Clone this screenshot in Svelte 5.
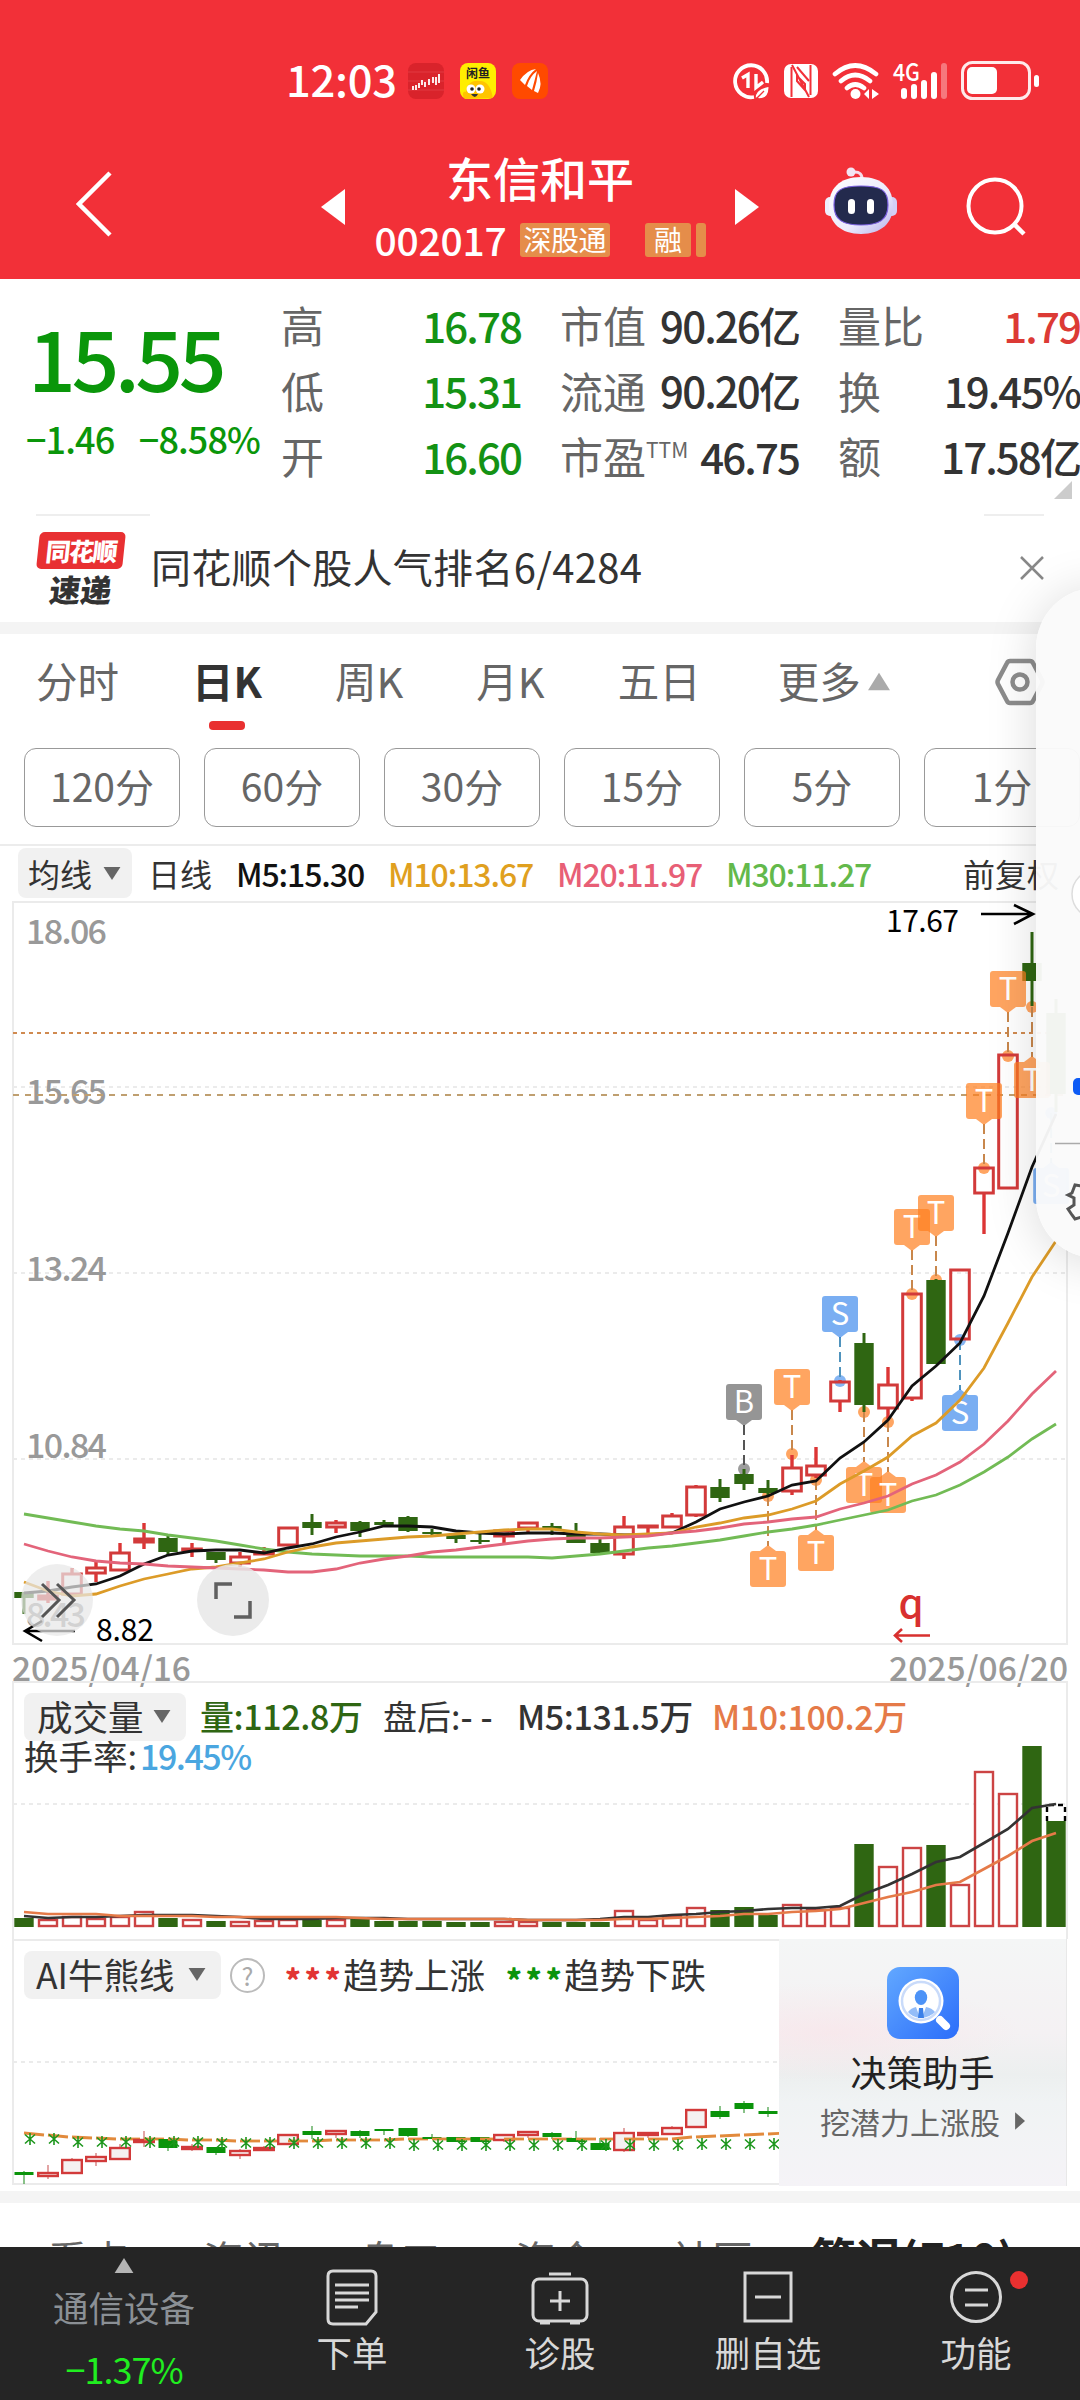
<script lang="ts">
	type Candle = [string, number, number, number, number];

	const STEP = 24;
	const cx = (i: number) => STEP + STEP * i;
	const toPoints = (ys: number[]) => ys.map((y, i) => `${cx(i)},${y}`).join(' ');

	const quotes = [
		[
			{ label: '高', value: '16.78', tone: 'down' },
			{ label: '市值', value: '90.26亿', tone: '' },
			{ label: '量比', value: '1.79', tone: 'up' }
		],
		[
			{ label: '低', value: '15.31', tone: 'down' },
			{ label: '流通', value: '90.20亿', tone: '' },
			{ label: '换', value: '19.45%', tone: '' }
		],
		[
			{ label: '开', value: '16.60', tone: 'down' },
			{ label: '市盈', sup: 'TTM', value: '46.75', tone: '' },
			{ label: '额', value: '17.58亿', tone: '' }
		]
	];

	const tabs = ['分时', '日K', '周K', '月K', '五日'];
	const periods = ['120分', '60分', '30分', '15分', '5分', '1分'];
	let activeTab = $state('日K');

	// kind (r = rise, g = fall), body top, body bottom, high, low
	const candles: Candle[] = [
		['g', 1592, 1598, 1592, 1614], ['r', 1596, 1599, 1581, 1603], ['r', 1574, 1594, 1568, 1594],
		['r', 1568, 1573, 1560, 1582], ['r', 1553, 1570, 1543, 1570], ['r', 1539, 1542, 1523, 1549],
		['g', 1538, 1552, 1535, 1555], ['r', 1549, 1550, 1543, 1557], ['g', 1552, 1560, 1552, 1563],
		['r', 1557, 1563, 1552, 1567], ['r', 1553, 1554, 1547, 1554], ['r', 1528, 1545, 1528, 1545],
		['g', 1522, 1528, 1514, 1535], ['r', 1523, 1527, 1520, 1533], ['g', 1522, 1531, 1521, 1537],
		['g', 1522, 1525, 1520, 1526], ['g', 1517, 1531, 1516, 1532], ['g', 1532, 1534, 1529, 1535],
		['g', 1535, 1539, 1534, 1543], ['g', 1540, 1542, 1534, 1544], ['r', 1531, 1536, 1529, 1543],
		['r', 1523, 1528, 1523, 1534], ['g', 1526, 1530, 1523, 1535], ['g', 1533, 1543, 1523, 1543],
		['g', 1543, 1553, 1539, 1553], ['r', 1527, 1554, 1516, 1559], ['r', 1526, 1527, 1526, 1533],
		['r', 1516, 1527, 1513, 1527], ['r', 1487, 1515, 1485, 1517], ['g', 1487, 1498, 1479, 1502],
		['g', 1474, 1484, 1469, 1490], ['g', 1488, 1493, 1480, 1497], ['r', 1468, 1491, 1455, 1495],
		['r', 1466, 1475, 1447, 1478], ['r', 1382, 1401, 1380, 1412], ['g', 1343, 1405, 1333, 1412],
		['r', 1385, 1408, 1367, 1419], ['r', 1294, 1398, 1293, 1401], ['g', 1280, 1364, 1279, 1364],
		['r', 1270, 1339, 1270, 1339], ['r', 1168, 1193, 1168, 1234], ['r', 1055, 1188, 1055, 1188],
		['g', 963, 981, 932, 1006], ['g', 1013, 1094, 999, 1112]
	];

	const averages = [
		{ color: '#72bb55', ys: [1514, 1518, 1522, 1526, 1529, 1531, 1535, 1538, 1541, 1545, 1549, 1552, 1554, 1555, 1556, 1556, 1556, 1557, 1557, 1557, 1557, 1557, 1558, 1556, 1554, 1551, 1548, 1546, 1543, 1540, 1536, 1532, 1529, 1525, 1520, 1515, 1510, 1501, 1495, 1485, 1472, 1457, 1439, 1424] },
		{ color: '#111111', ys: [1593, 1591, 1587, 1584, 1576, 1564, 1555, 1551, 1550, 1550, 1553, 1548, 1544, 1537, 1532, 1526, 1526, 1527, 1531, 1533, 1534, 1533, 1533, 1534, 1534, 1535, 1535, 1533, 1522, 1509, 1502, 1496, 1485, 1481, 1458, 1442, 1420, 1386, 1366, 1343, 1296, 1233, 1167, 1114] },
		{ color: '#dc9b28', ys: [1582, 1591, 1596, 1594, 1586, 1579, 1574, 1569, 1567, 1563, 1559, 1552, 1547, 1543, 1541, 1539, 1537, 1536, 1534, 1532, 1530, 1529, 1529, 1532, 1534, 1535, 1534, 1533, 1527, 1523, 1518, 1515, 1509, 1501, 1484, 1471, 1457, 1436, 1423, 1400, 1368, 1323, 1277, 1241] },
		{ color: '#e3647a', ys: [1544, 1551, 1557, 1561, 1563, 1564, 1566, 1567, 1568, 1569, 1570, 1572, 1572, 1569, 1563, 1559, 1556, 1552, 1550, 1547, 1544, 1541, 1539, 1538, 1538, 1537, 1536, 1533, 1531, 1528, 1524, 1522, 1519, 1517, 1509, 1503, 1496, 1484, 1475, 1462, 1444, 1421, 1394, 1371] }
	];

	// Trade marks: anchor is the candle price the mark hangs on
	const marks = [
		{ i: 30, text: 'B', anchor: 1469, above: true },
		{ i: 32, text: 'T', anchor: 1454, above: true },
		{ i: 34, text: 'S', anchor: 1381, above: true },
		{ i: 37, text: 'T', anchor: 1294, above: true },
		{ i: 38, text: 'T', anchor: 1280, above: true },
		{ i: 40, text: 'T', anchor: 1168, above: true },
		{ i: 41, text: 'T', anchor: 1056, above: true },
		{ i: 31, text: 'T', anchor: 1496, above: false },
		{ i: 33, text: 'T', anchor: 1480, above: false },
		{ i: 35, text: 'T', anchor: 1412, above: false },
		{ i: 36, text: 'T', anchor: 1422, above: false },
		{ i: 39, text: 'S', anchor: 1340, above: false },
		{ i: 42, text: 'T', anchor: 1007, above: false },
		{ i: 42.8, text: 'S', anchor: 1113, above: false }
	];
	const markFill: Record<string, string> = { T: '#ff7f1f', S: '#0b6be8', B: '#3c3c3c' };
	const markLine: Record<string, string> = { T: '#c8874c', S: '#4f93bd', B: '#555555' };

	const priceLabels = [
		{ text: '18.06', y: 944 },
		{ text: '15.65', y: 1104 },
		{ text: '13.24', y: 1281 },
		{ text: '10.84', y: 1458 },
		{ text: '8.43', y: 1627 }
	];

	const volumes: [string, number][] = [
		['g', 1918], ['r', 1920], ['r', 1917], ['r', 1919], ['r', 1917], ['r', 1912], ['g', 1918], ['r', 1920],
		['g', 1921], ['r', 1922], ['r', 1921], ['r', 1920], ['g', 1920], ['r', 1920], ['g', 1919], ['g', 1921],
		['g', 1921], ['g', 1921], ['g', 1922], ['g', 1922], ['r', 1922], ['r', 1922], ['g', 1922], ['g', 1922],
		['g', 1922], ['r', 1911], ['r', 1920], ['r', 1916], ['r', 1908], ['g', 1910], ['g', 1907], ['g', 1915],
		['r', 1905], ['r', 1910], ['r', 1908], ['g', 1844], ['r', 1867], ['r', 1848], ['g', 1845], ['r', 1885],
		['r', 1772], ['r', 1794], ['g', 1746], ['g', 1821]
	];
	const volumeM5 = [1916, 1918, 1917, 1917, 1916, 1915, 1915, 1915, 1916, 1917, 1919, 1919, 1919, 1918, 1918, 1918, 1919, 1919, 1919, 1919, 1919, 1920, 1920, 1920, 1919, 1917, 1917, 1915, 1914, 1912, 1911, 1909, 1908, 1908, 1906, 1894, 1885, 1874, 1862, 1857, 1843, 1829, 1808, 1804];
	const volumeM10 = [1912, 1914, 1914, 1914, 1916, 1916, 1916, 1916, 1917, 1917, 1917, 1917, 1917, 1917, 1918, 1919, 1919, 1919, 1919, 1919, 1919, 1920, 1920, 1920, 1920, 1919, 1919, 1918, 1917, 1916, 1914, 1914, 1912, 1911, 1909, 1903, 1897, 1892, 1885, 1882, 1869, 1856, 1841, 1833];

	const trend: Candle[] = [
		['g', 2172, 2175, 2171, 2184], ['r', 2173, 2176, 2165, 2179], ['r', 2160, 2173, 2158, 2173],
		['r', 2157, 2161, 2153, 2166], ['r', 2148, 2159, 2144, 2159], ['r', 2140, 2142, 2131, 2147],
		['g', 2139, 2148, 2139, 2151], ['r', 2147, 2149, 2144, 2151], ['g', 2147, 2153, 2147, 2155],
		['r', 2151, 2155, 2149, 2159], ['r', 2148, 2150, 2146, 2150], ['r', 2135, 2144, 2135, 2144],
		['g', 2131, 2135, 2126, 2139], ['r', 2131, 2134, 2131, 2138], ['g', 2131, 2136, 2130, 2138],
		['g', 2129, 2131, 2129, 2135], ['g', 2128, 2136, 2128, 2137], ['g', 2137, 2139, 2134, 2139],
		['g', 2137, 2142, 2137, 2142], ['g', 2137, 2142, 2137, 2142], ['r', 2135, 2140, 2135, 2142],
		['r', 2132, 2135, 2131, 2138], ['g', 2133, 2137, 2132, 2139], ['g', 2138, 2142, 2131, 2142],
		['g', 2143, 2150, 2138, 2150], ['r', 2133, 2150, 2128, 2152], ['r', 2133, 2135, 2133, 2138],
		['r', 2128, 2134, 2126, 2134], ['r', 2110, 2127, 2110, 2127], ['g', 2111, 2117, 2106, 2119],
		['g', 2103, 2109, 2101, 2113], ['g', 2111, 2114, 2107, 2117]
	];
	const trendLine = [2133, 2135, 2137, 2138, 2139, 2139, 2139, 2140, 2140, 2141, 2141, 2141, 2141, 2140, 2140, 2140, 2139, 2139, 2139, 2139, 2139, 2139, 2139, 2139, 2139, 2139, 2139, 2139, 2137, 2136, 2135, 2134, 2133];
	const starY = (i: number) => (i < 2 ? 2139 : i < 8 ? 2142 : i < 16 ? 2143 : i < 28 ? 2145 : 2144);

	const sections = ['看点', '资讯', '盘口', '资金', '社区'];
</script>

{#snippet caret(down: boolean, color: string, w: number, h: number)}
	<svg class="caret" width={w} height={h} viewBox="0 0 20 16">
		<path d={down ? 'M1 1h18L10 15z' : 'M10 0L20 16H0z'} fill={color} />
	</svg>
{/snippet}

<div class="screen">
	<header>
		<div class="status">
			<span class="time">12:03</span>
			<svg class="app" width="36" height="36" viewBox="0 0 36 36">
				<rect width="36" height="36" rx="8" fill="#d9232b" />
				<path d="M0 9h36M0 18h36M0 27h36" stroke="#e84a50" stroke-width=".6" />
				<path d="M5 23v4M8 22v5M11 25v-5M14 22v-5M17 24v-5M21 22v-6M25 20v-6M28 22v-8M31 20V11" stroke="#fff" stroke-width="1.8" />
			</svg>
			<svg class="app" width="36" height="36" viewBox="0 0 36 36">
				<rect width="36" height="36" rx="8" fill="#ffee00" />
				<text x="18" y="15" font-size="12" font-weight="700" text-anchor="middle" fill="#222">闲鱼</text>
				<path d="M5 36c-5-6 0-9 1-7 0-7 6-12 13-11 6-1 12 4 14 17z" fill="#ffc400" />
				<circle cx="11" cy="26" r="4.5" fill="#fff" /><circle cx="20" cy="26" r="4.5" fill="#fff" />
				<circle cx="12" cy="26" r="1.8" fill="#222" /><circle cx="19" cy="26" r="1.8" fill="#222" />
				<path d="M11 31h7q-3 6-7 0z" fill="#333" />
			</svg>
			<svg class="app" width="36" height="36" viewBox="0 0 36 36">
				<rect width="36" height="36" rx="8" fill="#ff4a00" />
				<path d="M8 17Q15 7 24 6Q17 11 13 22zM15 23Q18 13 25 8Q23 16 20 27zM22 28Q25 18 26 10Q31 21 26 30z" fill="#fff" />
			</svg>
			<svg class="signals" width="312" height="44" viewBox="730 58 312 44">
				<g fill="none" stroke="#fff" stroke-width="3.8">
					<path d="M754 96a16 16 0 1 1 13-14" />
					<path d="M742 77l6-3.500v13.500M763 81l-7 5.500V73" stroke-width="3.4" />
				</g>
				<path d="M755 97q0-9 14-12q1 13-10 13zM755 99l9-9" fill="#fff" stroke="#f23038" stroke-width="1.3" />
				<rect x="784" y="63" width="34" height="34" rx="7" fill="#fff" />
				<path d="M791.500 66v30M810.500 64v30" stroke="#f23038" stroke-width="2" />
				<path d="M792 64l17 32M797 75l8 8v6l-8-9zM797 66l12 14" fill="none" stroke="#f23038" stroke-width="2" />
				<g fill="none" stroke="#fff" stroke-width="4.6" stroke-linecap="round">
					<path d="M835 73q20-17 41 0M841 80q14-12 29 0M847 87q8-7 17 0" />
				</g>
				<circle cx="855.500" cy="93" r="5" fill="#fff" />
				<path d="M864 93l5-5v10zM872 88l7 5-7 5z" fill="#fff" />
				<text x="893" y="80" font-size="24" font-weight="500" fill="#fff" textLength="27" lengthAdjust="spacingAndGlyphs">4G</text>
				<g fill="#fff">
					<rect x="901" y="87" width="6" height="11" rx="3" />
					<rect x="911" y="83" width="6" height="15" rx="3" />
					<rect x="921" y="79" width="6" height="19" rx="3" />
					<rect x="931" y="71" width="6" height="27" rx="3" />
					<rect x="941" y="62" width="6" height="36" rx="3" opacity=".35" />
					<rect x="967" y="66" width="30" height="27" rx="5" />
					<rect x="1034" y="74" width="5" height="12" rx="2.500" />
				</g>
				<rect x="962.500" y="61.500" width="67" height="36" rx="10" fill="none" stroke="#fff" stroke-width="3" opacity=".9" />
			</svg>
		</div>
		<div class="nav">
			<svg class="back" width="38" height="66" viewBox="0 0 38 66">
				<path d="M34 2L3 33L34 64" fill="none" stroke="#fff" stroke-width="4.500" />
			</svg>
			<svg width="24" height="36" viewBox="0 0 24 36"><path d="M24 0v36L0 18z" fill="#fff" /></svg>
			<div class="stock">
				<h1>东信和平</h1>
				<div class="code">
					<span>002017</span>
					<i class="tag">深股通</i>
					<i class="tag margin">融</i>
					<i class="tag sliver"></i>
				</div>
			</div>
			<svg width="24" height="36" viewBox="0 0 24 36"><path d="M0 0v36L24 18z" fill="#fff" /></svg>
			<svg class="robot" width="72" height="68" viewBox="0 0 72 68">
				<defs>
					<linearGradient id="shell" x1="0" y1="0" x2="1" y2="1">
						<stop offset="0" stop-color="#fff" /><stop offset=".6" stop-color="#eceafc" /><stop offset="1" stop-color="#b5b1ea" />
					</linearGradient>
				</defs>
				<path d="M28 5q10-1 9 9" fill="none" stroke="#f6dcea" stroke-width="3" />
				<circle cx="26" cy="5" r="4.500" fill="#f3e4f2" />
				<rect x="0" y="30" width="12" height="19" rx="5" fill="#efeefd" />
				<rect x="60" y="30" width="12" height="19" rx="5" fill="#d3d0f6" />
				<path d="M36 10c22 0 32 12 32 29S56 67 36 67S4 56 4 39S14 10 36 10z" fill="url(#shell)" />
				<path d="M36 19c20 0 27 4 27 19s-9 20-27 20S9 53 9 38s7-19 27-19z" fill="#232a4d" stroke="#7a5fe0" stroke-width="1.200" />
				<rect x="23" y="32" width="7" height="15" rx="3.500" fill="#fff" />
				<rect x="42" y="32" width="7" height="15" rx="3.500" fill="#fff" />
			</svg>
			<svg class="search" width="62" height="62" viewBox="0 0 62 62">
				<circle cx="29" cy="30" r="26.500" fill="none" stroke="#fff" stroke-width="4" />
				<path d="M48 48l10 10" stroke="#fff" stroke-width="4.500" />
			</svg>
		</div>
	</header>

	<section class="quote">
		<div class="last">
			<strong>15.55</strong>
			<div class="change"><span>−1.46</span><span>−8.58%</span></div>
		</div>
		<div class="figures">
			{#each quotes as row}
				{#each row as cell}
					<div class="figure">
						<span class="label">{cell.label}{#if cell.sup}<sup>{cell.sup}</sup>{/if}</span>
						<span class="value {cell.tone}">{cell.value}</span>
					</div>
				{/each}
			{/each}
		</div>
		<svg class="corner" width="18" height="18" viewBox="0 0 18 18"><path d="M18 0v18H0z" fill="#ccc" /></svg>
	</section>

	<section class="notice">
		<div class="logo">
			<b>同花顺</b>
			<em>速递</em>
		</div>
		<p>同花顺个股人气排名6/4284</p>
		<svg width="24" height="24" viewBox="0 0 24 24"><path d="M1 1l22 22M23 1L1 23" stroke="#888" stroke-width="2.500" /></svg>
	</section>

	<nav class="tabs">
		{#each tabs as tab}
			<button class:active={tab === activeTab} onclick={() => (activeTab = tab)}>{tab}</button>
		{/each}
		<button class="more">更多{@render caret(false, '#aaa', 22, 19)}</button>
		<svg class="hex" width="50" height="48" viewBox="0 0 50 48">
			<path d="M15 3h20q2 0 3 2l9 17q1 2 0 4l-9 17q-1 2-3 2H15q-2 0-3-2L3 26q-1-2 0-4l9-17q1-2 3-2z" fill="none" stroke="#8c8c8c" stroke-width="4.500" />
			<circle cx="25" cy="24" r="7.500" fill="none" stroke="#8c8c8c" stroke-width="4.500" />
		</svg>
	</nav>
	<div class="periods">
		{#each periods as period}
			<button>{period}</button>
		{/each}
	</div>

	<div class="legend">
		<span class="chip">均线{@render caret(true, '#666', 20, 15)}</span>
		<span class="name">日线</span>
		<span class="m5">M5:15.30</span>
		<span class="m10">M10:13.67</span>
		<span class="m20">M20:11.97</span>
		<span class="m30">M30:11.27</span>
		<span class="adjust">前复权</span>
	</div>

	<svg class="kline" width="1080" height="748" viewBox="0 900 1080 748">
		<rect x="13" y="902" width="1054" height="742" fill="none" stroke="#ebebeb" stroke-width="2" />
		{#each [1087, 1273, 1459] as y}
			<line x1="13" x2="1067" y1={y} y2={y} stroke="#ebebeb" stroke-width="2" stroke-dasharray="4 4" />
		{/each}
		{#each priceLabels as label}
			<text class="axis" x="26" y={label.y} textLength={label.text.length > 4 ? 81 : 60}>{label.text}</text>
		{/each}
		<line x1="13" x2="1067" y1="1033" y2="1033" stroke="#d08a50" stroke-width="2" stroke-dasharray="4 4" />
		<line x1="13" x2="1067" y1="1095" y2="1095" stroke="#bf9f70" stroke-width="2" stroke-dasharray="6 6" />

		{#each marks as m}
			{@const x = cx(m.i)}
			{@const top = m.above ? m.anchor - 85 : m.anchor + 55}
			<circle cx={x} cy={m.anchor} r="6" fill={markFill[m.text]} opacity={m.text === 'T' ? 0.7 : 0.5} />
			<line x1={x} x2={x} y1={m.above ? top + 41 : m.anchor} y2={m.above ? m.anchor : top - 5} stroke={markLine[m.text]} stroke-width="2" stroke-dasharray="10 5" />
		{/each}
		{#each candles as [kind, top, bottom, high, low], i}
			{@const x = cx(i)}
			{#if kind === 'g'}
				<path d="M{x} {high}V{low}" stroke="#2f6612" stroke-width="3" />
				<rect x={x - 9.7} y={top} width="19.4" height={bottom - top} fill="#2f6612" />
			{:else}
				<path d="M{x} {high}V{top}M{x} {bottom}V{low}" stroke="#dc3535" stroke-width="3.4" />
				<rect x={x - 9.3} y={top} width="18.600" height={bottom - top} fill="none" stroke="#d23a3a" stroke-width="3" />
			{/if}
		{/each}
		{#each marks as m}
			{@const x = cx(m.i)}
			{@const top = m.above ? m.anchor - 85 : m.anchor + 55}
			<g>
				<g fill={markFill[m.text]} opacity={m.text === 'T' ? 0.7 : 0.54}>
					<rect x={x - 18} y={top} width="36" height="36" rx="3" />
					{#if m.above}
						<path d="M{x - 8} {top + 36}h16l-8 6z" />
					{:else}
						<path d="M{x - 8} {top}h16l-8 -6z" />
					{/if}
				</g>
				<text class="mark" x={x} y={top + 29}>{m.text}</text>
			</g>
		{/each}
		{#each averages as line}
			<polyline points={toPoints(line.ys)} fill="none" stroke={line.color} stroke-width="2.800" />
		{/each}

		<text class="note" x="886" y="932" textLength="73">17.67</text>
		<path d="M981 914h51M1014 905l19 9-19 10" fill="none" stroke="#000" stroke-width="2.600" />
		<text class="note" x="96" y="1641" textLength="58">8.82</text>
		<path d="M75 1631H25M42 1621l-17 10 17 10" fill="none" stroke="#000" stroke-width="2.600" />
		<text class="flag" x="911" y="1618">q</text>
		<path d="M930 1635.500H895M902 1629l-7 6.500 7 6.500" fill="none" stroke="#d8302f" stroke-width="2.600" />

		<circle cx="57" cy="1600" r="36" fill="#e8e8e8" opacity=".72" />
		<path d="M42 1584l17 16-17 17M57 1584l17 16-17 17" fill="none" stroke="#555" stroke-width="3" />
		<circle cx="233" cy="1600" r="36" fill="#e8e8e8" opacity=".85" />
		<path d="M216 1599v-15h16M250 1601v16h-16" fill="none" stroke="#606060" stroke-width="3.500" />
	</svg>

	<div class="dates"><span>2025/04/16</span><span>2025/06/20</span></div>

	<section class="volume">
		<svg width="1080" height="258" viewBox="0 1681 1080 258">
			<path d="M13 1939V1682H1067V1939" fill="none" stroke="#ebebeb" stroke-width="2" />
			<line x1="13" x2="1067" y1="1804" y2="1804" stroke="#ebebeb" stroke-width="2" stroke-dasharray="4 4" />
			{#each volumes as [kind, top], i}
				{#if kind === 'g'}
					<rect x={cx(i) - 9.7} y={top} width="19.400" height={1927 - top} fill="#2f6612" />
				{:else}
					<rect x={cx(i) - 9} y={top} width="18" height={1926 - top} fill="#fff" stroke="#cc4444" stroke-width="2.400" />
				{/if}
			{/each}
			<path d="M1047 1821v-16h18v16" fill="none" stroke="#000" stroke-width="2.400" stroke-dasharray="5 4" />
			<polyline points={toPoints(volumeM5)} fill="none" stroke="#333" stroke-width="2.700" />
			<polyline points={toPoints(volumeM10)} fill="none" stroke="#e57a48" stroke-width="2.700" />
		</svg>
		<div class="readout">
			<div class="line">
				<span class="chip">成交量{@render caret(true, '#666', 20, 15)}</span>
				<span class="amount">量:112.8万</span>
				<span class="after">盘后:<i>--</i></span>
				<span class="avg5">M5:131.5万</span>
				<span class="avg10">M10:100.2万</span>
			</div>
			<div class="turnover">换手率:<span>19.45%</span></div>
		</div>
	</section>

	<section class="ai">
		<div class="trend">
			<svg width="779" height="250" viewBox="0 1939 779 250">
				<path d="M779 1940H13V2184H779" fill="none" stroke="#ebebeb" stroke-width="2" />
				<line x1="13" x2="779" y1="2062" y2="2062" stroke="#ebebeb" stroke-width="2" stroke-dasharray="4 4" />
				{#each trend as [kind, top, bottom, high, low], i}
					{@const x = cx(i)}
					{#if kind === 'g'}
						<path d="M{x} {high}V{low}" stroke="#3c9a3c" stroke-width="1.200" />
						<rect x={x - 9.500} y={top} width="19" height={bottom - top} fill="#0b940b" />
					{:else}
						<path d="M{x} {high}V{top}M{x} {bottom}V{low}" stroke="#d06a6a" stroke-width="1.200" />
						<rect x={x - 9.800} y={top} width="19.600" height={bottom - top} fill="#f5f1f1" stroke="#d23a3a" stroke-width="2.400" />
					{/if}
					<path d="M{x} {trendLine[i]}L{x + 20} {trendLine[i + 1]}" stroke="#e28a3c" stroke-width="2.800" />
					<path transform="translate({x + 6} {starY(i)})" d="M0 -6V6M-5 -4.500L5 4.500M5 -4.500L-5 4.500" stroke="#1c961c" stroke-width="1.600" />
				{/each}
			</svg>
			<div class="readout line">
				<span class="chip">AI牛熊线{@render caret(true, '#666', 20, 15)}</span>
				<span class="help">?</span>
				<span class="stars rise">***</span><span class="way">趋势上涨</span>
				<span class="stars fall">***</span><span class="way">趋势下跌</span>
			</div>
		</div>
		<aside>
			<svg width="72" height="72" viewBox="0 0 72 72">
				<defs>
					<linearGradient id="tile" x1="0" y1="0" x2="1" y2="1">
						<stop offset="0" stop-color="#62a8ff" /><stop offset="1" stop-color="#2b6dfa" />
					</linearGradient>
				</defs>
				<rect width="72" height="72" rx="13" fill="url(#tile)" />
				<path d="M53 53l6 6" stroke="#fff" stroke-width="8" stroke-linecap="round" />
				<circle cx="34" cy="34" r="22.500" fill="#fff" />
				<circle cx="34" cy="34" r="19" fill="#fff" stroke="#c9dbfa" stroke-width="2.500" />
				<ellipse cx="34" cy="30.500" rx="6.200" ry="7.500" fill="#4d93f7" />
				<path d="M21 45q3-4 8-5l4 11q-8-1-12-6zM48 45q-3-4-9-5l-4 11q8-1 13-6z" fill="#94bdf8" />
				<path d="M32 41h4l1 10h-6z" fill="#3b80e8" />
			</svg>
			<h2>决策助手</h2>
			<p>挖潜力上涨股 <svg width="11" height="20" viewBox="0 0 10 18"><path d="M1 1l9 8-9 8z" fill="#666" /></svg></p>
		</aside>
	</section>

	<div class="sections">
		{#each sections as name}
			<span>{name}</span>
		{/each}
		<b>简况(F10)</b>
	</div>

	<footer>
		<div class="sector">
			{@render caret(false, '#b5b5b5', 26, 15)}
			<span>通信设备</span>
			<b>−1.37%</b>
		</div>
		<div class="action">
			<svg width="60" height="60" viewBox="0 0 60 60">
				<path d="M11 4h38q5 0 5 5v36L44 57H11q-5 0-5-5V9q0-5 5-5z" />
				<path d="M13 18h34M13 26h34M13 33h34M13 40h23" />
			</svg>
			<span>下单</span>
		</div>
		<div class="action">
			<svg width="60" height="60" viewBox="0 0 60 60">
				<rect x="3" y="12" width="54" height="42" rx="6" />
				<path d="M19 7h22M30 24v20M20 34h20M10 56h10M40 56h10" />
			</svg>
			<span>诊股</span>
		</div>
		<div class="action">
			<svg width="60" height="60" viewBox="0 0 60 60">
				<rect x="7" y="6" width="46" height="48" />
				<path d="M17 30h26" />
			</svg>
			<span>删自选</span>
		</div>
		<div class="action">
			<svg width="60" height="60" viewBox="0 0 60 60">
				<circle cx="30" cy="30" r="24.500" />
				<path d="M19 23h23M19 38h23" />
			</svg>
			<i class="dot"></i>
			<span>功能</span>
		</div>
	</footer>

	<div class="drawer">
		<svg width="44" height="670" viewBox="1036 588 44 670">
			<circle cx="1096" cy="894" r="24" fill="#fff" stroke="#ddd" stroke-width="1.500" />
			<rect x="1073" y="1078" width="20" height="17" rx="5" fill="#0d5bf5" />
			<path d="M1055 1143.500h25" stroke="#aaa" stroke-width="1.500" />
			<path d="M1088 1187l-13-2-3 8-4 2 6 3v7l-6 4 4 6 3 4 13-4" fill="none" stroke="#555" stroke-width="3" />
		</svg>
	</div>
</div>

<style>
	:global(body) {
		background: #fff;
	}

	.screen {
		position: relative;
		width: 1080px;
		height: 2400px;
		overflow: hidden;
		display: flex;
		flex-direction: column;
		background: #fff;
		color: #333;
		font-family: 'Noto Sans CJK SC', 'Noto Sans', sans-serif;
		line-height: 1;
	}

	.screen > * {
		flex-shrink: 0;
	}

	h1,
	h2,
	p {
		margin: 0;
		font-weight: 400;
	}

	svg {
		display: block;
		flex-shrink: 0;
	}

	button {
		padding: 0;
		border: none;
		background: none;
		font: inherit;
		color: inherit;
	}

	header {
		height: 279px;
		box-sizing: border-box;
		background: #f23038;
		color: #fff;
	}

	.status {
		display: flex;
		align-items: center;
		gap: 16px;
		height: 122px;
		padding: 40px 38px 0 286px;
		box-sizing: border-box;
	}

	.time {
		width: 106px;
		padding-bottom: 5px;
		font-size: 43.5px;
		font-weight: 500;
		white-space: nowrap;
		letter-spacing: -0.3px;
	}

	.signals {
		margin-left: auto;
	}

	.nav {
		display: flex;
		align-items: center;
		height: 157px;
		padding: 12px 0 0 76px;
		box-sizing: border-box;
	}

	.back {
		margin-right: 207px;
		margin-top: -5px;
	}

	.stock {
		width: 390px;
		height: 145px;
		display: flex;
		flex-direction: column;
		align-items: center;
	}

	.stock h1 {
		margin-top: 19px;
		font-size: 47px;
		font-weight: 500;
	}

	.code {
		display: flex;
		align-items: center;
		height: 40px;
		margin-top: 20px;
		font-size: 39px;
		font-weight: 500;
	}

	.code span {
		margin-top: -2px;
		letter-spacing: -0.2px;
	}

	.tag {
		height: 34px;
		margin-left: 13px;
		line-height: 33px;
		font-size: 28px;
		font-style: normal;
		font-weight: 400;
		letter-spacing: -0.5px;
		background: #e58d4a;
		border-radius: 3px;
		padding: 0 4px;
	}

	.tag.margin {
		margin-left: 35px;
		padding: 0 9px;
	}

	.tag.sliver {
		width: 10px;
		margin-left: 5px;
		padding: 0;
	}

	.robot {
		margin-left: 66px;
		margin-top: -12px;
	}

	.search {
		margin-left: 69px;
	}

	.quote {
		position: relative;
		display: flex;
		height: 235px;
	}

	.last {
		width: 281px;
		color: #0a960a;
	}

	.last strong {
		display: block;
		height: 84px;
		margin: 35px 0 0 28px;
		line-height: 84px;
		font-size: 84px;
		font-weight: 500;
		letter-spacing: -4.5px;
	}

	.change {
		display: flex;
		justify-content: space-between;
		margin-top: 22px;
		padding: 0 21px 0 26px;
		font-size: 36px;
		font-weight: 500;
		letter-spacing: -0.9px;
	}

	.figures {
		flex: 1;
		display: grid;
		grid-template-columns: 240px 239px 242px;
		grid-template-rows: repeat(3, 65.5px);
		column-gap: 39px;
		padding-top: 13px;
	}

	.figure {
		display: flex;
		align-items: center;
		justify-content: space-between;
		font-size: 43px;
		white-space: nowrap;
	}

	.label {
		color: #666;
	}

	.label sup {
		font-size: 21px;
		vertical-align: 16px;
		line-height: 0;
	}

	.value {
		font-size: 42px;
		font-weight: 500;
		letter-spacing: -1.9px;
	}

	.up {
		color: #dc3a35;
	}

	.down {
		color: #149214;
	}

	.corner {
		position: absolute;
		right: 8px;
		bottom: 15px;
	}

	.notice {
		display: flex;
		align-items: center;
		height: 108px;
		padding: 0 36px;
		box-sizing: border-box;
		background:
			linear-gradient(#eee, #eee) 36px 0 / 114px 2px no-repeat,
			linear-gradient(#eee, #eee) 984px 0 / 60px 2px no-repeat;
	}

	.notice p {
		flex: 1;
		margin: -4px 0 0 25px;
		font-size: 40px;
		letter-spacing: 0.3px;
	}

	.logo {
		width: 90px;
		height: 72px;
		display: flex;
		flex-direction: column;
		align-items: center;
	}

	.logo b {
		width: 86px;
		height: 38px;
		line-height: 37px;
		text-align: center;
		font-size: 25px;
		font-weight: 900;
		letter-spacing: -1.5px;
		color: #fff;
		background: #e83032;
		border-radius: 5px;
		transform: skewX(-6deg);
	}

	.logo em {
		margin-top: 4px;
		font-size: 31px;
		font-style: normal;
		font-weight: 900;
		transform: skewX(-7deg);
	}

	.tabs {
		position: relative;
		display: flex;
		align-items: center;
		height: 114px;
		padding: 0 0 8px 36px;
		box-sizing: border-box;
		border-top: 12px solid #f4f4f4;
		font-size: 41.5px;
		color: #666;
	}

	.tabs button {
		position: relative;
		margin-right: 73px;
		white-space: nowrap;
	}

	.tabs .active {
		color: #333;
		font-weight: 700;
	}

	.tabs .active::after {
		content: '';
		position: absolute;
		left: 50%;
		bottom: -28px;
		width: 36px;
		height: 9px;
		margin-left: -18px;
		border-radius: 4px;
		background: #e93030;
	}

	.tabs .more {
		display: flex;
		align-items: center;
		gap: 7px;
		margin: 0;
		padding-left: 4px;
	}

	.hex {
		position: absolute;
		left: 995px;
		top: 24px;
	}

	.periods {
		display: flex;
		gap: 24px;
		height: 110px;
		padding: 12px 0 0 24px;
		box-sizing: border-box;
		overflow: hidden;
		border-bottom: 2px solid #ececec;
	}

	.periods button {
		flex: 0 0 156px;
		height: 79px;
		padding-bottom: 4px;
		border: 1.5px solid #999;
		border-radius: 12px;
		font-size: 39px;
		color: #666;
	}

	.legend {
		display: flex;
		align-items: center;
		height: 54px;
		padding: 0 0 0 18px;
		font-size: 32px;
		font-weight: 500;
		white-space: nowrap;
		letter-spacing: -1.1px;
	}

	.chip {
		display: inline-flex;
		align-items: center;
		justify-content: space-between;
		height: 50px;
		padding: 0 10px;
		box-sizing: border-box;
		border-radius: 8px;
		background: #f1f1f1;
		letter-spacing: 0;
		font-weight: 400;
	}

	.legend .chip {
		width: 114px;
	}

	.legend .name {
		width: 88px;
		margin-left: 16px;
		font-weight: 400;
		letter-spacing: 0;
	}

	.m5 {
		width: 152px;
		color: #111;
	}

	.m10 {
		width: 169px;
		color: #e0a01f;
	}

	.m20 {
		width: 169px;
		color: #e85f76;
	}

	.m30 {
		width: 237px;
		color: #63b94b;
	}

	.adjust {
		font-weight: 400;
		letter-spacing: 0;
	}

	.axis {
		font-size: 34px;
		font-weight: 500;
		fill: #999;
	}

	.note {
		font-size: 30px;
		fill: #000;
	}

	.mark {
		font-size: 31px;
		fill: #fff;
		text-anchor: middle;
	}

	.flag {
		font-size: 40px;
		font-weight: 500;
		fill: #d8302f;
		text-anchor: middle;
	}

	.dates {
		display: flex;
		justify-content: space-between;
		height: 33px;
		padding: 0 12px;
		line-height: 38px;
		font-size: 33.5px;
		font-weight: 500;
		color: #999;
	}

	.volume,
	.trend {
		display: grid;
		grid-template-columns: 100%;
	}

	.volume {
		height: 258px;
	}

	.volume > *,
	.trend > * {
		grid-area: 1 / 1;
	}

	.readout {
		padding: 12px 0 0 24px;
		font-size: 35.5px;
		white-space: nowrap;
	}

	.line {
		display: flex;
		align-items: center;
	}

	.line > span:not(.help, .stars) {
		padding-bottom: 2px;
	}

	.readout .chip {
		width: 162px;
		height: 48px;
		padding: 0 14px 0 13px;
	}

	.readout.line {
		align-items: flex-start;
		line-height: 46px;
	}

	.readout.line .chip {
		width: 197px;
		padding-left: 12px;
	}

	.amount {
		width: 183px;
		margin-left: 14px;
		color: #2f6612;
		font-size: 34px;
		font-weight: 500;
		letter-spacing: -0.4px;
	}

	.after {
		width: 134px;
		font-size: 34px;
	}

	.after i {
		font-style: normal;
		font-weight: 500;
		letter-spacing: 8px;
	}

	.avg5 {
		width: 195px;
		font-size: 34px;
		font-weight: 500;
		letter-spacing: -0.4px;
	}

	.avg10 {
		color: #e57a48;
		font-size: 34px;
		font-weight: 500;
		letter-spacing: -0.4px;
	}

	.turnover {
		font-size: 34.5px;
		line-height: 29px;
	}

	.turnover span {
		margin-left: 3px;
		font-weight: 500;
		font-size: 34px;
		color: #4aa6e0;
		letter-spacing: -1.5px;
	}

	.ai {
		display: flex;
		height: 252px;
	}

	.trend {
		width: 779px;
	}

	.help {
		width: 31px;
		height: 31px;
		margin: 7px 20px 0 9px;
		border: 2.5px solid #bbb;
		border-radius: 50%;
		line-height: 30px;
		text-align: center;
		font-size: 25px;
		color: #aaa;
	}

	.stars {
		width: 58px;
		line-height: 56px;
		font-size: 30px;
		font-weight: 900;
		letter-spacing: 4px;
	}

	.rise {
		color: #e23333;
	}

	.fall {
		color: #0b940b;
	}

	.way {
		width: 163px;
	}

	aside {
		width: 288px;
		height: 247px;
		display: flex;
		flex-direction: column;
		align-items: center;
		padding-top: 28px;
		box-sizing: border-box;
		border-right: 1px solid #e8e8e8;
		background:
			radial-gradient(ellipse 190px 50px at 18% 38%, rgba(250, 225, 230, 0.55), transparent),
			linear-gradient(#f4f6f6, #f4f1f3 38%, #ecefef 55%, #f0f3f4 66%, #f5f3f7);
	}

	aside h2 {
		margin-top: 14px;
		font-size: 36px;
		color: #222;
	}

	aside p {
		display: flex;
		align-items: center;
		gap: 14px;
		margin-top: 17px;
		font-size: 30px;
		color: #666;
	}

	.sections {
		display: flex;
		height: 56px;
		padding: 35px 0 0 47px;
		box-sizing: border-box;
		overflow: hidden;
		border-top: 12px solid #f4f4f4;
		font-size: 41px;
		color: #666;
		white-space: nowrap;
	}

	.sections span {
		margin-right: 74px;
	}

	.sections b {
		margin: -4px 0 0 -16px;
		font-size: 45px;
		color: #222;
	}

	footer {
		display: grid;
		grid-template-columns: 248px repeat(4, 208px);
		height: 153px;
		background: #252525;
		color: #d8d8d8;
	}

	.sector {
		display: flex;
		flex-direction: column;
		align-items: center;
		padding-top: 11px;
		font-size: 35.5px;
		color: #8b9095;
	}

	.sector span {
		margin-top: 16px;
	}

	.sector b {
		margin-top: 25px;
		font-size: 36px;
		font-weight: 400;
		letter-spacing: -1px;
		color: #20ee20;
	}

	.action {
		position: relative;
		display: flex;
		flex-direction: column;
		align-items: center;
		padding-top: 20px;
		font-size: 35.5px;
	}

	.action svg {
		fill: none;
		stroke: #d8d8d8;
		stroke-width: 3;
	}

	.action span {
		margin-top: 7px;
	}

	.dot {
		position: absolute;
		top: 24px;
		left: 138px;
		width: 18px;
		height: 18px;
		border-radius: 50%;
		background: #e93030;
	}

	/* Edge drawer sliding in over the right side */
	.drawer {
		position: absolute;
		left: 1036px;
		top: 588px;
		width: 120px;
		height: 670px;
		border-radius: 60px;
		background: rgba(250, 250, 250, 0.96);
		box-shadow: 0 4px 50px rgba(0, 0, 0, 0.15);
	}
</style>
